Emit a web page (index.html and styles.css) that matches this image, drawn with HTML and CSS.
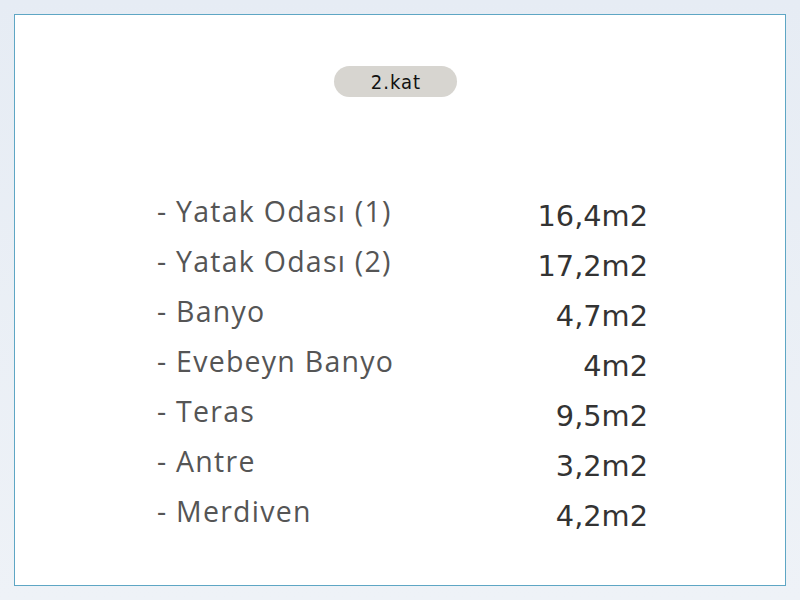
FILE: index.html
```html
<!DOCTYPE html>
<html lang="tr">
<head>
<meta charset="utf-8">
<link rel="stylesheet" href="styles.css">
</head>
<body>
<div class="card">
  <div class="badge-row"><span class="badge">2.kat</span></div>
  <div class="rooms">
    <div class="name">- Yatak Odası (1)</div><div class="area">16,4m2</div>
    <div class="name">- Yatak Odası (2)</div><div class="area">17,2m2</div>
    <div class="name">- Banyo</div><div class="area">4,7m2</div>
    <div class="name">- Evebeyn Banyo</div><div class="area">4m2</div>
    <div class="name">- Teras</div><div class="area">9,5m2</div>
    <div class="name">- Antre</div><div class="area">3,2m2</div>
    <div class="name">- Merdiven</div><div class="area">4,2m2</div>
  </div>
</div>
</body>
</html>
```
FILE: styles.css
```css
html, body {
  margin: 0;
  padding: 0;
}
body {
  width: 800px;
  height: 600px;
  background: linear-gradient(180deg, #e6ecf4 0%, #eef2f7 100%);
  padding: 14px;
  box-sizing: border-box;
  overflow: hidden;
}
.card {
  box-sizing: border-box;
  width: 772px;
  height: 572px;
  background: #ffffff;
  border: 1px solid #5ea6c4;
  padding-top: 51px;
}
.badge-row {
  display: flex;
  justify-content: center;
  padding-right: 10px;
}
.badge {
  display: inline-flex;
  align-items: center;
  justify-content: center;
  width: 123px;
  height: 31px;
  border-radius: 16px;
  background: #d7d5d0;
  color: #111111;
  font-family: "DejaVu Sans Condensed", "DejaVu Sans", sans-serif;
  font-size: 20px;
  letter-spacing: 1px;
  padding-left: 2px;
  box-sizing: border-box;
}
.rooms {
  display: grid;
  grid-template-columns: 1fr auto;
  width: 490px;
  margin: 89px 0 0 142px;
}
.name {
  font-family: "Open Sans", sans-serif;
  font-size: 28.5px;
  letter-spacing: 1.25px;
  color: #555555;
  line-height: 50px;
}
.area {
  font-family: "DejaVu Sans", sans-serif;
  font-size: 28.8px;
  color: #333333;
  line-height: 50px;
  text-align: right;
  position: relative;
  top: 5px;
  left: 1px;
}
```
